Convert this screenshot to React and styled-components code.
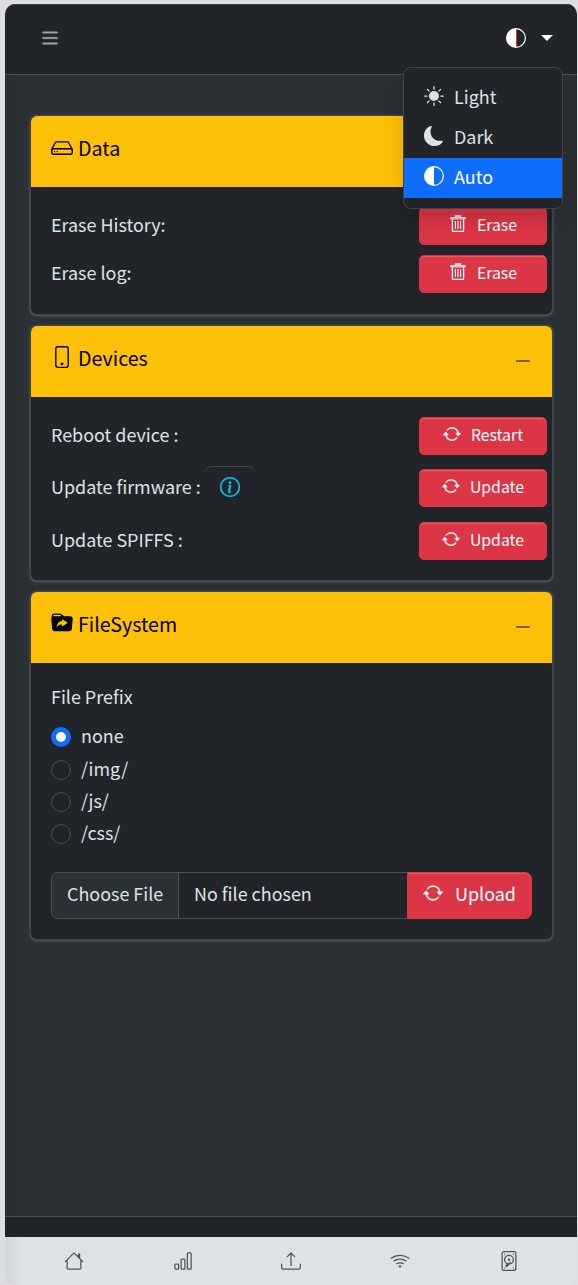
import React from "react";
import styled, { createGlobalStyle, css } from "styled-components";
import {
  BsList, BsCircleHalf, BsSunFill, BsMoonFill, BsHdd, BsPhone, BsFolderSymlinkFill,
  BsArrowRepeat, BsInfoCircle, BsHouse, BsBarChart, BsUpload, BsWifi,
  BsDeviceHdd,
} from "react-icons/bs";

const Global = createGlobalStyle`
  *, *::before, *::after { box-sizing: border-box; }
  body {
    margin: 0;
    background: #dcdee2;
    color: #dee2e6;
    font-family: "Noto Sans CJK SC", "Noto Sans", sans-serif;
    font-size: 17.93px;
    line-height: 30px;
  }
  button { font: inherit; color: inherit; }
  svg { display: block; flex: none; }
`;

const Page = styled.div`
  height: 1285px;
  padding: 4px 1px 0 5px;
  overflow: hidden;
`;
const Shell = styled.div`
  display: flex;
  flex-direction: column;
  height: 1281px;
  overflow: hidden;
  border-radius: 10px;
  background: #dee2e6;
`;
const Header = styled.header`
  display: flex;
  justify-content: space-between;
  align-items: center;
  height: 71px;
  padding: 0 24px 4px 34px;
  background: #212529;
  border-top: 1px solid #3b3e42;
  border-bottom: 1px solid #495057;
`;
const MenuButton = styled.button`
  padding: 0;
  border: 0;
  background: none;
  color: #a0a2a4;
  svg { stroke: currentColor; stroke-width: 0.4; }
`;
const ThemePicker = styled.div`
  position: relative;
  display: flex;
  align-items: center;
  gap: 15px;
  color: #fff;
`;
const Caret = styled.span`
  border: 6px solid transparent;
  border-top-color: #fff;
  border-bottom: 0;
`;
const Dropdown = styled.div`
  position: absolute;
  z-index: 2;
  top: 39px;
  right: -10px;
  width: 160px;
  height: 142px;
  padding: 10px 0;
  background: #212529;
  border: 1px solid #41454a;
  border-radius: 8px;
  box-shadow: 0 10px 20px rgba(0, 0, 0, 0.15);
`;
const Option = styled.div`
  display: flex;
  gap: 10px;
  height: 40px;
  padding: 3px 20px;
  color: ${(p) => (p.$active ? "#fff" : "#dee2e6")};
  background: ${(p) => (p.$active ? "#0d6efd" : "none")};
  svg { margin-top: 5px; }
`;
const SplitCircle = styled(BsCircleHalf)`
  background: linear-gradient(#d33, #d33) 10px 50% / 1px 18px no-repeat;
`;
const Main = styled.main`
  flex: none;
  height: 1141px;
  padding: 40px 24px 0 25px;
  display: flex;
  flex-direction: column;
  gap: 10px;
  background: linear-gradient(90deg, #282d31, #2b3035 22px);
`;
const Card = styled.section`
  height: ${(p) => p.$height}px;
  border-radius: 7px;
  background: #212529;
  border: 1px solid #3f4347;
  box-shadow: 0 0 1px rgba(173, 181, 189, 0.4), 0 1px 3px rgba(173, 181, 189, 0.35);
`;
const CardHeader = styled.h3`
  display: flex;
  gap: 5px;
  height: 71px;
  margin: 0;
  padding: 17px 20px;
  border-radius: 6px 6px 0 0;
  background: #ffc107;
  color: #000;
  font-size: 19.65px;
  font-weight: 400;
`;
const HeaderIcon = styled.span`
  padding-top: ${(p) => p.$top || 3}px;
`;
const Collapse = styled.span`
  width: 14px;
  height: 2px;
  margin: 17px 2px 0 auto;
  background: #806104;
`;
const Body = styled.div`
  padding: 20px 5px 0 20px;
`;
const Row = styled.div`
  display: flex;
  align-items: center;
  height: 38px;
  margin-bottom: ${(p) => p.$gap || 10}px;
`;
const Label = styled.span`
  padding-bottom: 5px;
`;
const danger = css`
  display: flex;
  justify-content: center;
  border: 1px solid #dc3545;
  background: #dc3545;
  color: #fff;
  box-shadow: inset 0 1px 0 rgba(255, 255, 255, 0.15), inset 0 2px 0 rgba(255, 255, 255, 0.04);
`;
const ActionButton = styled.button`
  ${danger}
  width: 128px;
  height: 38px;
  margin-left: auto;
  padding: 3px 0 0;
  gap: 10px;
  border-radius: 5px;
  font-size: 15.8px;
  line-height: 28px;
  svg { margin-top: 4px; }
`;
const RepeatIcon = styled(BsArrowRepeat)`
  stroke: currentColor;
  stroke-width: 0.3;
`;
const InfoButton = styled.button`
  display: grid;
  place-items: center;
  align-self: flex-start;
  width: 50px;
  height: 46px;
  margin: -3px 0 0 4px;
  padding: 0 0 4px;
  border: 0;
  border-radius: 7px;
  background: none;
  color: #0dcaf0;
  box-shadow: inset 0 1px 0 rgba(255, 255, 255, 0.15);
  svg { stroke: currentColor; stroke-width: 0.3; }
`;
const FileBody = styled.div`
  padding: 18px 20px 0;
`;
const Radio = styled.label`
  display: flex;
  align-items: center;
  gap: 10px;
  height: 32.4px;
`;
const Dot = styled.span`
  width: 20px;
  height: 20px;
  border-radius: 50%;
  border: ${(p) => (p.$on ? "5.5px solid #0d6efd" : "1px solid #495057")};
  background: ${(p) => (p.$on ? "#fff" : "#212529")};
`;
const RadioText = styled.span`
  padding-bottom: 4px;
`;
const Radios = styled.div`
  margin-top: 10px;
`;
const Upload = styled.div`
  display: flex;
  height: 47px;
  margin-top: 21px;
`;
const Choose = styled.span`
  width: 128px;
  padding: 5px 0 0 15px;
  background: #2b3035;
  border: 1px solid #495057;
  border-radius: 7px 0 0 7px;
`;
const FileName = styled.span`
  flex: 1;
  padding: 5px 0 0 15px;
  border: solid #495057;
  border-width: 1px 0;
`;
const UploadButton = styled.button`
  ${danger}
  gap: 12px;
  width: 125px;
  padding: 5px 0 0;
  border-radius: 0 7px 7px 0;
  svg { margin-top: 5px; }
`;
const Footer = styled.footer`
  flex: none;
  height: 21px;
  background: #212529;
  border-top: 1px solid #495057;
`;
const Tabs = styled.nav`
  display: flex;
  height: 48px;
  padding: 0 14px 0 15px;
  background: linear-gradient(90deg, #d2d5d7, #dee2e6 18px);
  color: #50555a;
`;
const Tab = styled.span`
  flex: 1;
  display: grid;
  place-items: center;
`;

function TrashIcon() {
  return (
    <svg width="18" height="18" viewBox="0 0 18 18" fill="none" stroke="currentColor" strokeWidth="1.3">
      <path d="M6.5 2.3V1h5v1.3" />
      <path d="M1.7 2.6h14.6v1.3H1.7z" strokeWidth="1" />
      <path d="M3.4 4v11.2q0 1.2 1.2 1.2h8.8q1.2 0 1.2-1.2V4" />
      <path d="M6.4 6v8M9 6v8M11.6 6v8" strokeWidth="1.1" />
    </svg>
  );
}

const themes = [
  ["Light", BsSunFill],
  ["Dark", BsMoonFill],
  ["Auto", BsCircleHalf],
];
const tabs = [BsHouse, BsBarChart, BsUpload, BsWifi, BsDeviceHdd];

function Panel({ title, icon: Icon, iconTop, height, children }) {
  return (
    <Card $height={height}>
      <CardHeader>
        <HeaderIcon $top={iconTop}><Icon size={22} /></HeaderIcon>
        {title}
        <Collapse />
      </CardHeader>
      {children}
    </Card>
  );
}

function Action({ label, icon: Icon, text, gap, info }) {
  return (
    <Row $gap={gap}>
      <Label>{label}</Label>
      {info && <InfoButton aria-label="Firmware information"><BsInfoCircle size={20} /></InfoButton>}
      <ActionButton><Icon size={18} />{text}</ActionButton>
    </Row>
  );
}

export default function App() {
  return (
    <Page>
      <Global />
      <Shell>
        <Header>
          <MenuButton aria-label="Menu"><BsList size={22} /></MenuButton>
          <ThemePicker>
            <SplitCircle size={20} />
            <Caret />
            <Dropdown>
              {themes.map(([name, Icon]) => (
                <Option key={name} $active={name === "Auto"}><Icon size={20} />{name}</Option>
              ))}
            </Dropdown>
          </ThemePicker>
        </Header>
        <Main>
          <Panel title="Data" icon={BsHdd} iconTop={4} height={200}>
            <Body>
              <Action label="Erase History:" icon={TrashIcon} text="Erase" />
              <Action label="Erase log:" icon={TrashIcon} text="Erase" />
            </Body>
          </Panel>
          <Panel title="Devices" icon={BsPhone} height={256}>
            <Body>
              <Action label="Reboot device :" icon={RepeatIcon} text="Restart" gap={14} />
              <Action label="Update firmware :" icon={RepeatIcon} text="Update" gap={15} info />
              <Action label="Update SPIFFS :" icon={RepeatIcon} text="Update" />
            </Body>
          </Panel>
          <Panel title="FileSystem" icon={BsFolderSymlinkFill} height={349}>
            <FileBody>
              <div>File Prefix</div>
              <Radios>
                {["none", "/img/", "/js/", "/css/"].map((name) => (
                  <Radio key={name}><Dot $on={name === "none"} /><RadioText>{name}</RadioText></Radio>
                ))}
              </Radios>
              <Upload>
                <Choose>Choose File</Choose>
                <FileName>No file chosen</FileName>
                <UploadButton><RepeatIcon size={20} />Upload</UploadButton>
              </Upload>
            </FileBody>
          </Panel>
        </Main>
        <Footer />
        <Tabs>
          {tabs.map((Icon, i) => <Tab key={i}><Icon size={20} /></Tab>)}
        </Tabs>
      </Shell>
    </Page>
  );
}
